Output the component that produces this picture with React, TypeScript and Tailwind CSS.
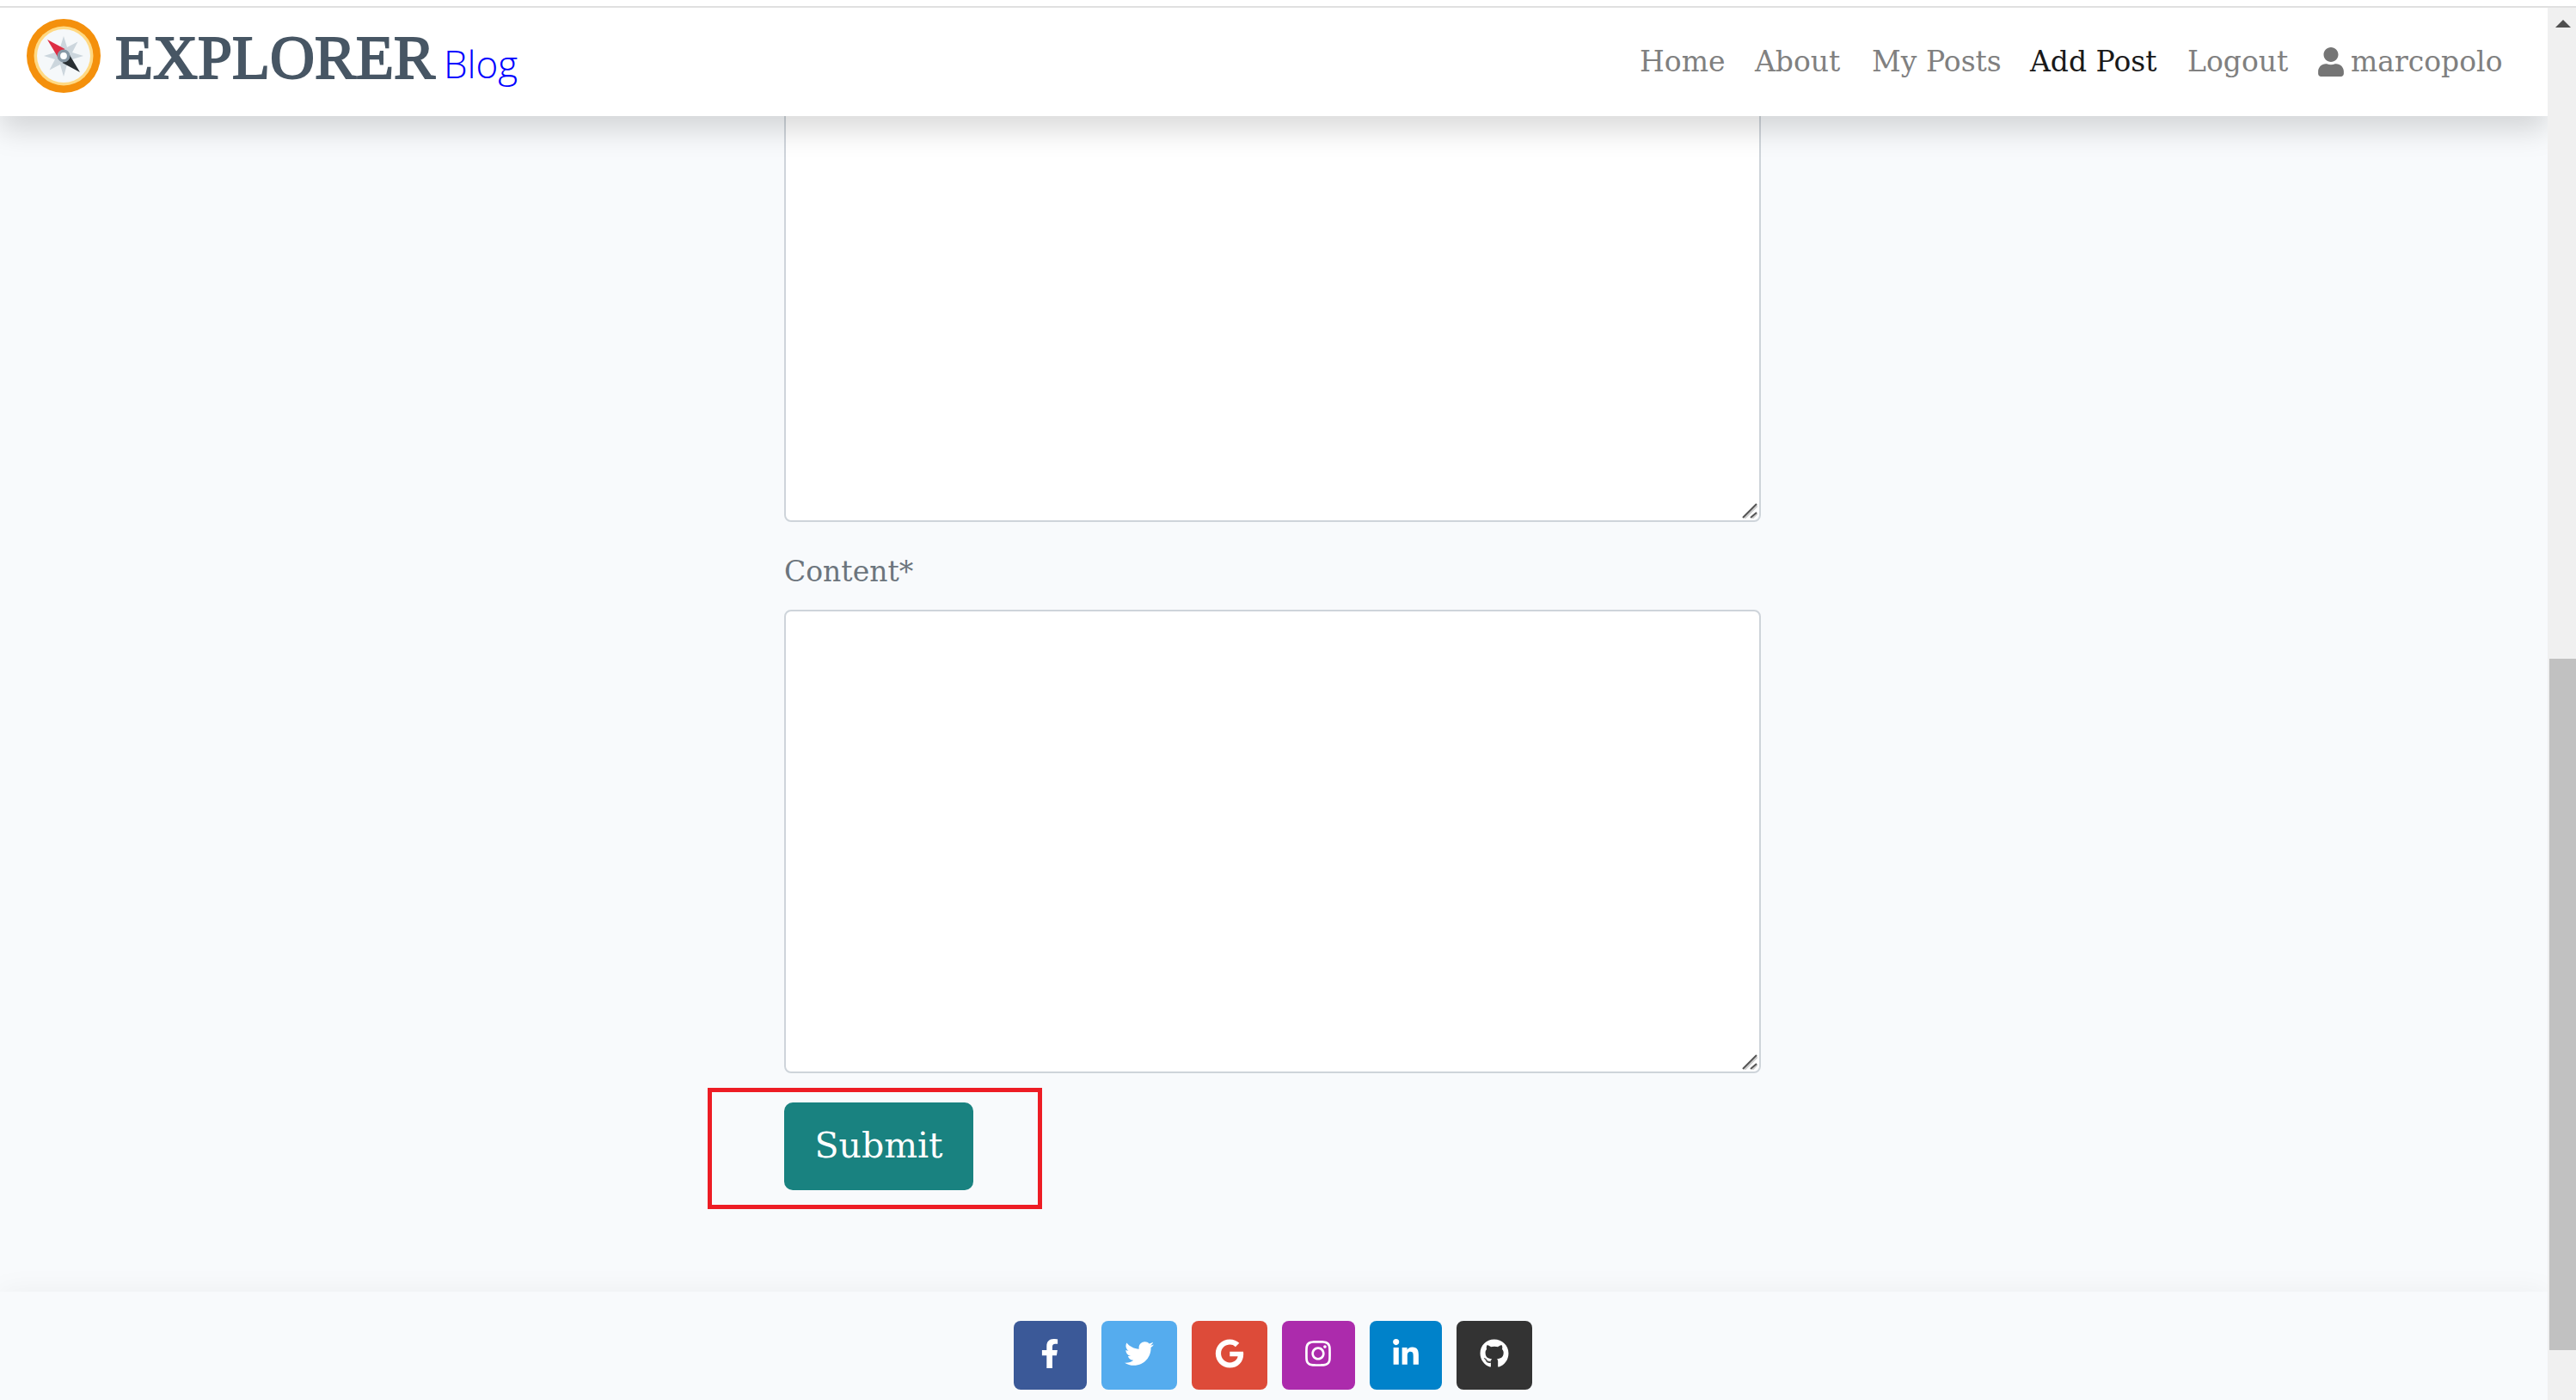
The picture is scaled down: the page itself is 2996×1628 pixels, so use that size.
import React from "react";
import {
  FaFacebookF,
  FaGithub,
  FaGoogle,
  FaInstagram,
  FaLinkedinIn,
  FaTwitter,
  FaUser,
} from "react-icons/fa";

const navLinks = [
  { label: "Home", width: "w-[100px]", active: false },
  { label: "About", width: "w-[102px]", active: false },
  { label: "My Posts", width: "w-[150px]", active: false },
  { label: "Add Post", width: "w-[149px]", active: true },
  { label: "Logout", width: "w-[116px]", active: false },
];

const socials = [
  { name: "Facebook", Icon: FaFacebookF, style: "w-[85px] bg-[#3b5998]" },
  { name: "Twitter", Icon: FaTwitter, style: "w-[88px] bg-[#55acee]" },
  { name: "Google", Icon: FaGoogle, style: "w-[88px] bg-[#dd4b39]" },
  { name: "Instagram", Icon: FaInstagram, style: "w-[85px] bg-[#ac2bac]" },
  { name: "LinkedIn", Icon: FaLinkedinIn, style: "w-[84px] bg-[#0082ca]" },
  { name: "GitHub", Icon: FaGithub, style: "w-[88px] bg-[#333333]" },
];

function Compass() {
  return (
    <svg viewBox="0 0 86 86" className="size-[86px] shrink-0" aria-hidden="true">
      <circle cx="43" cy="43" r="43" fill="#f4900c" />
      <circle cx="43" cy="43" r="34.5" fill="#ffd983" />
      <circle cx="43" cy="43" r="31" fill="#f5f8fa" />
      <path
        d="M43 20l4 13 12.500-6.500L53 39l13 4-13 4 6.500 12.500L47 53l-4 14-4-14-12.500 6.500L33 47l-13-4 13-4-6.500-12.500L39 33z"
        fill="#ccd6dd"
      />
      <path d="M24 24l20.500 11-8.500 9z" fill="#dd2e44" />
      <path d="M62 62L41.500 51l8.500-9z" fill="#292f33" />
      <circle cx="43" cy="43" r="5.700" fill="#fff" stroke="#8899a6" strokeWidth="3.600" />
    </svg>
  );
}

function TextArea({ id, label }: { id: string; label: string }) {
  return (
    <div className="relative">
      <textarea
        id={id}
        aria-label={label}
        className="block h-[539px] w-full resize-none rounded-lg border-2 border-[#ced4da] bg-white px-6 py-3 text-[32px] text-[#495057] outline-none"
      />
      <svg
        viewBox="0 0 18 18"
        className="pointer-events-none absolute right-1 bottom-1 size-[18px]"
        fill="none"
        strokeWidth="2"
        aria-hidden="true"
      >
        <path d="M3 18L18 3M12 18l6-6" stroke="#cfcfcf" />
        <path d="M1 17L17 1M10 17l7-6" stroke="#555" />
      </svg>
    </div>
  );
}

function Scrollbar() {
  return (
    <div className="flex w-[33px] shrink-0 flex-col bg-[#f0f0f0] pl-[2px]" aria-hidden="true">
      <svg viewBox="0 0 31 34" className="h-[34px] w-[31px]">
        <path d="M7 23l9-9 9 9z" fill="#505050" />
      </svg>
      <div className="grow-[723]" />
      <div className="grow-[804] bg-[#c1c1c1]" />
      <div className="grow-[58]" />
    </div>
  );
}

export default function App() {
  return (
    <div className="flex h-screen flex-col overflow-hidden bg-white pt-[7px] font-['DejaVu_Serif',serif]">
      <div className="h-[2px] shrink-0 bg-[#e0e0e0]" />
      <div className="flex min-h-0 grow">
        <div className="flex min-w-0 grow flex-col overflow-hidden bg-[#f8fafc]">
          <header className="relative z-10 flex h-[126px] shrink-0 items-center justify-between bg-white pr-[49px] pl-[31px] shadow-[0_16px_32px_rgba(0,0,0,0.15)]">
            <a href="#" className="flex items-start gap-[17px] pb-[6px]">
              <Compass />
              <span className="flex items-baseline gap-[10px] pt-[2px] leading-[86px]">
                <span className="font-['Liberation_Serif',serif] text-[72px] text-[#475664] [-webkit-text-stroke:2px_#475664]">
                  EXPLORER
                </span>
                <span className="font-['Open_Sans',sans-serif] text-[44px] font-light text-[#0000ff]">
                  Blog
                </span>
              </span>
            </a>
            <nav className="flex items-center gap-[34px] text-[33px] leading-[48px]">
              {navLinks.map(({ label, width, active }) => (
                <a
                  key={label}
                  href="#"
                  className={`${width} whitespace-nowrap ${active ? "text-[#191919]" : "text-[#808080]"}`}
                >
                  {label}
                </a>
              ))}
              <a href="#" className="flex items-center gap-[6px] text-[#808080]">
                <FaUser className="size-[34px] text-[#757575]" />
                <span className="w-[180px]">marcopolo</span>
              </a>
            </nav>
          </header>

          <main className="shrink-0 pr-[3px]">
            <form className="mx-auto -mt-[67px] w-full max-w-[1136px]">
              <TextArea id="excerpt" label="Excerpt" />
              <label
                htmlFor="content"
                className="mt-[34px] mb-[20px] block text-[33px] leading-[48px] text-[#6c757d]"
              >
                Content*
              </label>
              <TextArea id="content" label="Content" />
              <div className="relative mt-[34px] h-[102px] w-[220px]">
                <button
                  type="button"
                  className="h-full w-full rounded-[10px] bg-[#198280] text-[41px] text-white"
                >
                  Submit
                </button>
                <div className="pointer-events-none absolute -top-[17px] -right-[80px] -bottom-[22px] -left-[89px] border-5 border-[#ed1c24]" />
              </div>
            </form>
          </main>

          <footer className="mt-[118px] flex grow items-start justify-center gap-[17px] bg-[#f8fafc] pt-[34px] pr-[3px] shadow-[0_0_32px_rgba(0,0,0,0.05)]">
            {socials.map(({ name, Icon, style }) => (
              <a
                key={name}
                href="#"
                aria-label={name}
                className={`${style} flex h-[80px] items-center justify-center rounded-lg pb-1 text-white`}
              >
                <Icon className="size-[34px]" />
              </a>
            ))}
          </footer>
        </div>
        <Scrollbar />
      </div>
    </div>
  );
}
